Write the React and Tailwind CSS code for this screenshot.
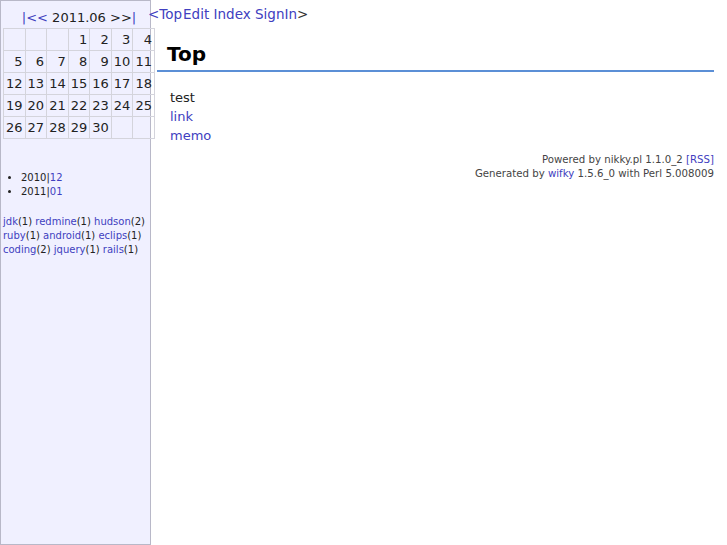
export default function App() {
  const weeks = [
    ["", "", "", "1", "2", "3", "4"],
    ["5", "6", "7", "8", "9", "10", "11"],
    ["12", "13", "14", "15", "16", "17", "18"],
    ["19", "20", "21", "22", "23", "24", "25"],
    ["26", "27", "28", "29", "30", "", ""],
  ];
  const tags = [
    [["jdk", 1], ["redmine", 1], ["hudson", 2]],
    [["ruby", 1], ["android", 1], ["eclips", 1]],
    [["coding", 2], ["jquery", 1], ["rails", 1]],
  ];

  return (
    <div className="flex min-h-[545px] bg-white text-[#222] font-['DejaVu_Sans',sans-serif]">
      {/* sidebar */}
      <div className="w-[151px] shrink-0 border border-[#b8b8c8] bg-[#f0f0ff]">
        <div className="pt-[9px] text-center text-[13px] leading-[16px] w-[152px] ml-[2px]">
          <span className="text-[#4040c0]">|&lt;&lt;</span> 2011.06 &gt;&gt;
          <span className="text-[#4040c0]">|</span>
        </div>
        <table className="mt-[2px] ml-[2px] w-[152px] table-fixed border-collapse text-[13px] relative">
          <tbody>
            {weeks.map((w, i) => (
              <tr key={i} className="h-[22px]">
                {w.map((d, j) => (
                  <td key={j} className="border border-[#d4d4dc] text-right pr-[2px] leading-[16px] p-0">
                    {d}
                  </td>
                ))}
              </tr>
            ))}
          </tbody>
        </table>
        <ul className="mt-[32px] list-disc pl-[20px] text-[10px] leading-[14px]">
          <li>
            2010|<span className="text-[#4040c0]">12</span>
          </li>
          <li>
            2011|<span className="text-[#4040c0]">01</span>
          </li>
        </ul>
        <div className="mt-[16px] pl-[2px] text-[10px] leading-[14px]">
          {tags.map((row, i) => (
            <div key={i}>
              {row.map(([t, n], j) => (
                <span key={j}>
                  {j > 0 && " "}
                  <span className="text-[#4040c0]">{t}</span>({n})
                </span>
              ))}
            </div>
          ))}
        </div>
      </div>

      {/* main */}
      <div className="flex-1 min-w-0">
        <div className="pt-[6px] ml-[-3px] text-[13.5px] leading-[16px] text-[#4040c0]">
          &lt;Top<span className="ml-[1px]">Edit</span> Index SignIn<span className="text-[#333]">&gt;</span>
        </div>
        <div className="ml-[6px] mr-[13px]">
          <h2 className="mt-[20px] pl-[10px] pb-[4px] border-b-2 border-[#5b8fd6] text-[20px] leading-[24px] font-bold text-black">
            Top
          </h2>
          <div className="pt-[16px] pl-[13px] text-[13px] leading-[19px]">
            <div>test</div>
            <div className="text-[#4040c0]">link</div>
            <div className="text-[#4040c0]">memo</div>
          </div>
          <div className="mt-[8px] text-right text-[10.2px] leading-[14px] text-[#444]">
            <div>
              Powered by nikky.pl 1.1.0_2 <span className="text-[#4040c0]">[RSS]</span>
            </div>
            <div>
              Generated by <span className="text-[#4040c0]">wifky</span> 1.5.6_0 with Perl 5.008009
            </div>
          </div>
        </div>
      </div>
    </div>
  );
}
